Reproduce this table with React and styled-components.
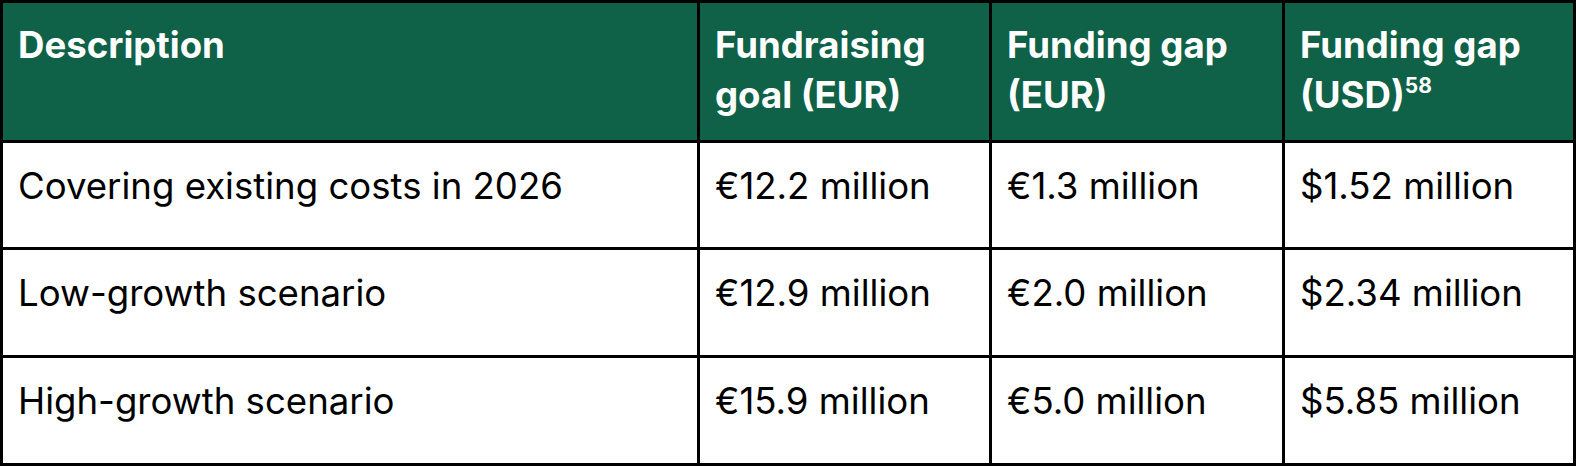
import styled, { createGlobalStyle } from 'styled-components';

const GlobalStyle = createGlobalStyle`
    html, body {
        margin: 0;
        padding: 0;
        background: #ffffff;
    }
    body {
        font-family: Inter, "Noto Sans", sans-serif;
    }
`

const rows = [
    { description: "Covering existing costs in 2026", goal: "€12.2 million", gapEur: "€1.3 million", gapUsd: "$1.52 million" },
    { description: "Low-growth scenario", goal: "€12.9 million", gapEur: "€2.0 million", gapUsd: "$2.34 million" },
    { description: "High-growth scenario", goal: "€15.9 million", gapEur: "€5.0 million", gapUsd: "$5.85 million" },
]

export default function App(){
    return(
        <>
        <GlobalStyle/>
        <Table>
            <colgroup>
                <Col width={697}/>
                <Col width={292}/>
                <Col width={293}/>
                <Col width={291}/>
            </colgroup>
            <thead>
                <tr>
                    <HeadCell>Description</HeadCell>
                    <HeadCell>Fundraising goal (EUR)</HeadCell>
                    <HeadCell>Funding gap (EUR)</HeadCell>
                    <HeadCell>Funding gap (USD)<Note>58</Note></HeadCell>
                </tr>
            </thead>
            <tbody>
                {rows.map((row, i) => (
                    <BodyRow key={i} $tall={i > 0}>
                        <Cell>{row.description}</Cell>
                        <Cell>{row.goal}</Cell>
                        <Cell>{row.gapEur}</Cell>
                        <Cell>{row.gapUsd}</Cell>
                    </BodyRow>
                ))}
            </tbody>
        </Table>
        </>
    )
}

const Table = styled.table`
    width: 1576px;
    table-layout: fixed;
    border-collapse: collapse;
    border: 3px solid #000;
`

const Col = styled.col`
    width: ${props => props.width}px;
`

const HeadCell = styled.th`
    background-color: #0f6148;
    color: #ffffff;
    border: 3px solid #000;
    text-align: left;
    vertical-align: top;
    font-weight: 700;
    font-size: 36.6px;
    line-height: 50px;
    height: 138px;
    box-sizing: border-box;
    padding: 17px 15px 20px 15px;
`

const Note = styled.sup`
    font-size: 21px;
    line-height: 0;
    vertical-align: 15px;
`

const BodyRow = styled.tr`
    height: ${props => props.$tall ? 108 : 107}px;
`

const Cell = styled.td`
    border: 3px solid #000;
    color: #000;
    vertical-align: top;
    font-size: 36.6px;
    line-height: 50px;
    padding: 18px 15px 0 15px;
`
